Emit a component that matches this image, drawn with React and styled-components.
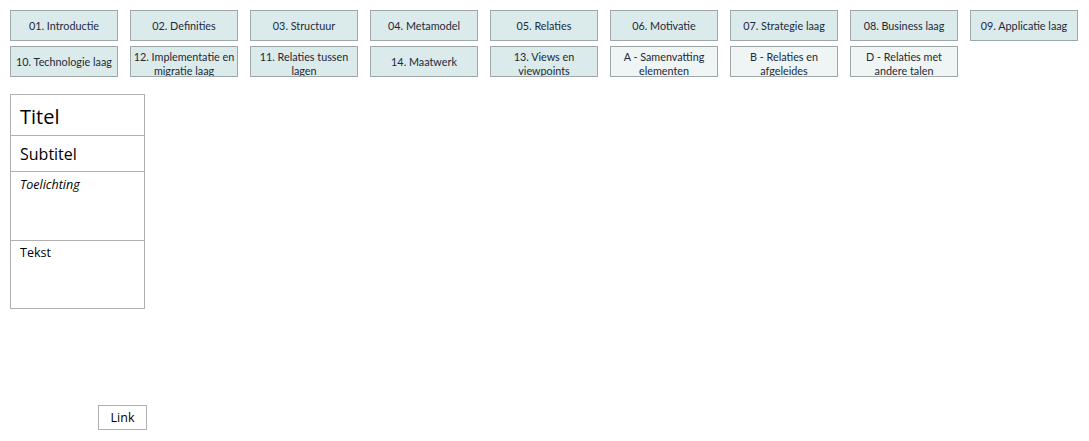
import React from "react";
import styled, { createGlobalStyle } from "styled-components";

const Global = createGlobalStyle`
  html, body { margin: 0; padding: 0; background: #ffffff; }
  body { font-family: "Open Sans", "Noto Sans", sans-serif; }
`;

const Page = styled.div`
  padding: 10px;
  display: flex;
  flex-direction: column;
  align-items: flex-start;
`;

const Nav = styled.nav`
  display: grid;
  grid-template-columns: repeat(9, 108px);
  grid-auto-rows: 31px;
  column-gap: 12px;
  row-gap: 5px;
`;

const NavButton = styled.div`
  box-sizing: border-box;
  height: 31px;
  border: 1px solid #9ea8a8;
  background: ${(p) => (p.$light ? "#eef5f4" : "#dbeaea")};
  color: #1b2b3b;
  font-family: "Lato", "Liberation Sans", sans-serif;
  font-size: 10.8px;
  line-height: 14px;
  text-align: center;
  display: flex;
  align-items: ${(p) => (p.$wrap ? "flex-start" : "center")};
  justify-content: center;
  overflow: hidden;
  padding: ${(p) => (p.$wrap ? "3px 0 0" : "0")};
`;

const Panel = styled.div`
  margin-top: 17px;
  box-sizing: border-box;
  width: 135px;
  border: 1px solid #b0b0b0;
  display: flex;
  flex-direction: column;
`;

const Field = styled.div`
  box-sizing: border-box;
  height: ${(p) => p.$h}px;
  padding: ${(p) => p.$pt}px 9px 0;
  border-top: ${(p) => (p.$first ? "none" : "1px solid #b0b0b0")};
  color: #000;
  font-size: ${(p) => p.$fs}px;
  font-style: ${(p) => (p.$italic ? "italic" : "normal")};
  line-height: 1.2;
`;

const LinkButton = styled.div`
  margin-top: 96px;
  margin-left: 88px;
  box-sizing: border-box;
  width: 49px;
  height: 25px;
  border: 1px solid #b0b0b0;
  display: flex;
  align-items: center;
  justify-content: center;
  font-size: 12.5px;
  color: #000;
`;

const items = [
  ["01. Introductie"],
  ["02. Definities"],
  ["03. Structuur"],
  ["04. Metamodel"],
  ["05. Relaties"],
  ["06. Motivatie"],
  ["07. Strategie laag"],
  ["08. Business laag"],
  ["09. Applicatie laag"],
  ["10. Technologie laag"],
  ["12. Implementatie en migratie laag", false, true],
  ["11. Relaties tussen lagen", false, true],
  ["14. Maatwerk"],
  ["13. Views en viewpoints", false, true],
  ["A - Samenvatting elementen", true, true],
  ["B - Relaties en afgeleides", true, true],
  ["D - Relaties met andere talen", true, true],
];

export default function App() {
  return (
    <>
      <Global />
      <Page>
        <Nav>
          {items.map(([label, light, wrap]) => (
            <NavButton key={label} $light={light} $wrap={wrap}>
              {label}
            </NavButton>
          ))}
        </Nav>
        <Panel>
          <Field $first $h={40} $pt={10} $fs={20}>Titel</Field>
          <Field $h={36} $pt={9} $fs={16}>Subtitel</Field>
          <Field $h={69} $pt={5} $fs={12.5} $italic>Toelichting</Field>
          <Field $h={68} $pt={4} $fs={12.5}>Tekst</Field>
        </Panel>
        <LinkButton>Link</LinkButton>
      </Page>
    </>
  );
}
